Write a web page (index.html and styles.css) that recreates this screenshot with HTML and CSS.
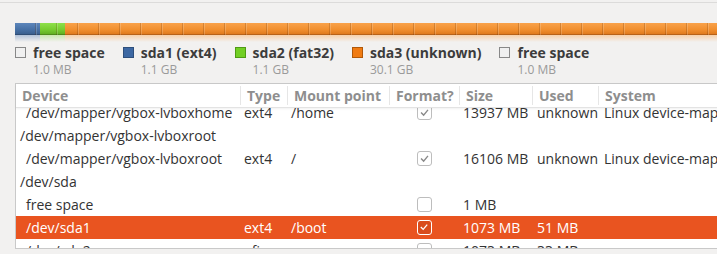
FILE: index.html
```html
<!DOCTYPE html>
<html>
<head>
<meta charset="utf-8">
<link rel="stylesheet" href="styles.css">
</head>
<body>
<div class="topline"></div>
<div class="map">
  <div class="bar">
    <div class="seg blue"></div>
    <div class="seg green"></div>
    <div class="seg orange"></div>
  </div>
  <div class="reflect"></div>
</div>
<div class="legend">
  <div class="item"><span class="sw sw-free"></span><div class="lbl"><div class="name">free space</div><div class="sz">1.0 MB</div></div></div>
  <div class="item"><span class="sw sw-blue"></span><div class="lbl"><div class="name">sda1 (ext4)</div><div class="sz">1.1 GB</div></div></div>
  <div class="item"><span class="sw sw-green"></span><div class="lbl"><div class="name">sda2 (fat32)</div><div class="sz">1.1 GB</div></div></div>
  <div class="item"><span class="sw sw-orange"></span><div class="lbl"><div class="name">sda3 (unknown)</div><div class="sz">30.1 GB</div></div></div>
  <div class="item"><span class="sw sw-free"></span><div class="lbl"><div class="name">free space</div><div class="sz">1.0 MB</div></div></div>
</div>
<div class="table">
  <div class="head row-grid">
    <div class="hc">Device</div>
    <div class="hc sep">Type</div>
    <div class="hc sep">Mount point</div>
    <div class="hc sep">Format?</div>
    <div class="hc sep">Size</div>
    <div class="hc sep">Used</div>
    <div class="hc sep">System</div>
  </div>
  <div class="body">
    <div class="rows">
      <div class="row row-grid">
        <div class="c dev child">/dev/mapper/vgbox-lvboxhome</div><div class="c">ext4</div><div class="c">/home</div>
        <div class="c fmt"><span class="cb on"><svg viewBox="0 0 15 15"><polyline points="3.5,7.5 6.5,10.5 11.5,4.5"/></svg></span></div>
        <div class="c">13937 MB</div><div class="c used">unknown</div><div class="c sys">Linux device-map</div>
      </div>
      <div class="row row-grid">
        <div class="c dev">/dev/mapper/vgbox-lvboxroot</div><div class="c"></div><div class="c"></div><div class="c"></div><div class="c"></div><div class="c"></div><div class="c"></div>
      </div>
      <div class="row row-grid">
        <div class="c dev child">/dev/mapper/vgbox-lvboxroot</div><div class="c">ext4</div><div class="c">/</div>
        <div class="c fmt"><span class="cb on"><svg viewBox="0 0 15 15"><polyline points="3.5,7.5 6.5,10.5 11.5,4.5"/></svg></span></div>
        <div class="c">16106 MB</div><div class="c used">unknown</div><div class="c sys">Linux device-map</div>
      </div>
      <div class="row row-grid">
        <div class="c dev">/dev/sda</div><div class="c"></div><div class="c"></div><div class="c"></div><div class="c"></div><div class="c"></div><div class="c"></div>
      </div>
      <div class="row row-grid">
        <div class="c dev child">free space</div><div class="c"></div><div class="c"></div>
        <div class="c fmt"><span class="cb"></span></div>
        <div class="c">1 MB</div><div class="c used"></div><div class="c sys"></div>
      </div>
      <div class="row row-grid selected">
        <div class="c dev child">/dev/sda1</div><div class="c">ext4</div><div class="c">/boot</div>
        <div class="c fmt"><span class="cb on"><svg viewBox="0 0 15 15"><polyline points="3.5,7.5 6.5,10.5 11.5,4.5"/></svg></span></div>
        <div class="c">1073 MB</div><div class="c used">51 MB</div><div class="c sys"></div>
      </div>
      <div class="row row-grid">
        <div class="c dev child">/dev/sda2</div><div class="c">efi</div><div class="c"></div>
        <div class="c fmt"><span class="cb"></span></div>
        <div class="c">1073 MB</div><div class="c used">33 MB</div><div class="c sys"></div>
      </div>
    </div>
  </div>
</div>
</body>
</html>
```

FILE: styles.css
```css
html, body {
  margin: 0;
  padding: 0;
  height: 254px;
  overflow: hidden;
  background: #f2f1f0;
  font-family: "Open Sans", "Noto Sans", sans-serif;
  color: #333;
}
.topline {
  height: 2px;
  border-bottom: 1px solid #dcdbda;
}
.map {
  margin: 20px 0 0 15px;
}
.bar {
  display: flex;
  height: 12px;
  position: relative;
}
.seg {
  height: 12px;
  box-sizing: border-box;
}
.blue {
  width: 25px;
  background: linear-gradient(#5d86bb, #4670a5 60%, #3a5f8f);
  border-bottom: 1px solid #2f4d75;
}
.green {
  width: 25px;
  background: linear-gradient(#8ee04a, #76cc2f 60%, #62b022);
  border-bottom: 1px solid #4e8c1a;
}
.orange {
  flex: 1;
  background: linear-gradient(#f9a24a, #f18f2e 60%, #e07a1d);
  border-bottom: 1px solid #b86218;
}
.bar::after {
  content: "";
  position: absolute;
  inset: 0;
  background-image: repeating-linear-gradient(90deg, transparent 0 19px, rgba(90,40,0,0.22) 19px 20px, rgba(255,255,255,0.18) 20px 21px);
  background-position: 1px 0;
  pointer-events: none;
}
.reflect {
  height: 7px;
  background:
    linear-gradient(rgba(242,241,240,0.2), #f2f1f0),
    linear-gradient(90deg, #9fb4d2 0 25px, #bfe59d 25px 50px, #f8c898 50px);
}
.legend {
  display: flex;
  gap: 18px;
  margin: 3px 0 0 15px;
  height: 31px;
}
.item {
  display: flex;
  gap: 7px;
}
.sw {
  width: 11px;
  height: 11px;
  box-sizing: border-box;
  border: 1px solid #777;
  margin-top: 2px;
  flex: none;
}
.sw-free { background: #f0f0f0; border-color: #888; }
.sw-blue { background: #3d68a3; border-color: #2e4f7c; }
.sw-green { background: #72cf24; border-color: #4f9a14; }
.sw-orange { background: #f07b12; border-color: #b15808; }
.name {
  font-weight: bold;
  font-size: 14px;
  line-height: 16px;
  color: #3c3c3c;
  white-space: nowrap;
}
.sz {
  font-size: 12px;
  line-height: 13px;
  color: #9a9a9a;
  margin-top: 2px;
}
.table {
  margin: 7px 0 0 15px;
  width: 760px;
  background: #fff;
  border: 1px solid #c9c9c9;
  border-right: none;
}
.row-grid {
  display: grid;
  grid-template-columns: 224px 47px 102px 70px 73px 66px 1fr;
}
.head {
  height: 23px;
  border-bottom: 1px solid #e3e3e3;
  box-shadow: 0 1px 2px rgba(0,0,0,0.06);
  position: relative;
  z-index: 1;
  background: #fff;
}
.hc {
  font-size: 14px;
  font-weight: bold;
  color: #8e8e8e;
  line-height: 23px;
  padding-left: 6px;
  white-space: nowrap;
  overflow: hidden;
}
.hc.sep {
  border-left: 1px solid #e6e6e6;
  margin: 2px 0;
  line-height: 19px;
}
.body {
  height: 140px;
  overflow: hidden;
}
.rows {
  margin-top: -7px;
}
.row {
  height: 23px;
  font-size: 14px;
  line-height: 23px;
}
.c {
  padding-left: 4px;
  white-space: nowrap;
  overflow: hidden;
}
.dev { padding-left: 4px; }
.dev.child { padding-left: 10px; }
.used { padding-left: 5px; }
.sys { padding-left: 6px; }
.fmt {
  padding-left: 0;
  display: flex;
  align-items: center;
  justify-content: center;
}
.cb {
  width: 15px;
  height: 15px;
  box-sizing: border-box;
  border: 1px solid #bdbdbd;
  border-radius: 3px;
  background: #fff;
  display: block;
}
.cb svg {
  display: block;
  width: 13px;
  height: 13px;
  fill: none;
  stroke: #8a8a8a;
  stroke-width: 1.6;
}
.selected {
  background: #e95420;
  color: #fff;
}
.selected .cb {
  background: #d94c1c;
  border: 1.5px solid #fff;
}
.selected .cb svg { stroke: #fff; width: 12px; height: 12px; }
```
